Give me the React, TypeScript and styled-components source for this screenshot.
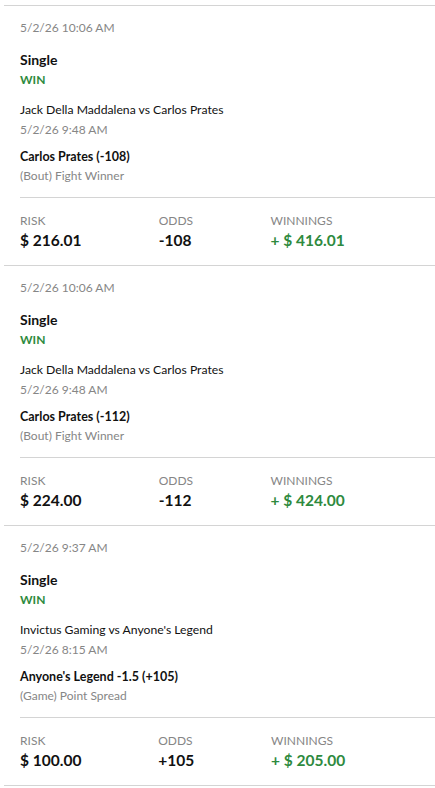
import React from 'react';
import styled, { createGlobalStyle } from 'styled-components';

const GlobalStyle = createGlobalStyle`
  body {
    margin: 0;
    background: #fff;
    font-family: Lato, "Liberation Sans", sans-serif;
    color: #111;
  }
`;

const BetList = styled.div`
  margin: 5px 0 0 4px;
  border-top: 1px solid #d4d4d4;
`;

const BetCard = styled.div`
  display: flex;
  flex-direction: column;
  padding: 14px 0 15px 16px;
  border-bottom: 1px solid #d4d4d4;
`;

const Muted = styled.div<{ $gap?: number }>`
  font-size: 12px;
  line-height: 16px;
  color: #868686;
  margin-top: ${(p) => p.$gap ?? 0}px;
`;

const BetType = styled.div`
  font-size: 14px;
  line-height: 18px;
  font-weight: 700;
  margin-top: 15px;
`;

const Result = styled.div`
  font-size: 12px;
  line-height: 16px;
  font-weight: 700;
  color: #2e8a3e;
  margin-top: 3px;
`;

const Matchup = styled.div`
  font-size: 12.2px;
  line-height: 18px;
  margin-top: 13px;
`;

const Selection = styled.div`
  font-size: 12.5px;
  line-height: 16px;
  font-weight: 700;
  margin-top: 11px;
`;

const Divider = styled.div`
  height: 1px;
  background: #d4d4d4;
  margin-top: 13px;
`;

const Stats = styled.div`
  display: flex;
  margin-top: 15px;
  padding-right: 13px;
`;

const Stat = styled.div`
  flex: 1 1 auto;
  display: flex;
  flex-direction: column;
`;

const StatValue = styled.div<{ $win?: boolean }>`
  font-size: 15.5px;
  line-height: 20px;
  font-weight: 700;
  margin-top: 1px;
  color: ${(p) => (p.$win ? '#2e8a3e' : '#111')};
`;

type Bet = {
  placed: string;
  matchup: string;
  eventTime: string;
  selection: string;
  market: string;
  risk: string;
  odds: string;
  winnings: string;
};

const bets: Bet[] = [
  {
    placed: '5/2/26 10:06 AM',
    matchup: 'Jack Della Maddalena vs Carlos Prates',
    eventTime: '5/2/26 9:48 AM',
    selection: 'Carlos Prates (-108)',
    market: '(Bout) Fight Winner',
    risk: '$ 216.01',
    odds: '-108',
    winnings: '+ $ 416.01',
  },
  {
    placed: '5/2/26 10:06 AM',
    matchup: 'Jack Della Maddalena vs Carlos Prates',
    eventTime: '5/2/26 9:48 AM',
    selection: 'Carlos Prates (-112)',
    market: '(Bout) Fight Winner',
    risk: '$ 224.00',
    odds: '-112',
    winnings: '+ $ 424.00',
  },
  {
    placed: '5/2/26 9:37 AM',
    matchup: "Invictus Gaming vs Anyone's Legend",
    eventTime: '5/2/26 8:15 AM',
    selection: "Anyone's Legend -1.5 (+105)",
    market: '(Game) Point Spread',
    risk: '$ 100.00',
    odds: '+105',
    winnings: '+ $ 205.00',
  },
];

function App() {
  return (
    <>
      <GlobalStyle />
      <BetList>
        {bets.map((bet, i) => (
          <BetCard key={i}>
            <Muted>{bet.placed}</Muted>
            <BetType>Single</BetType>
            <Result>WIN</Result>
            <Matchup>{bet.matchup}</Matchup>
            <Muted $gap={3}>{bet.eventTime}</Muted>
            <Selection>{bet.selection}</Selection>
            <Muted $gap={3}>{bet.market}</Muted>
            <Divider />
            <Stats>
              <Stat>
                <Muted>RISK</Muted>
                <StatValue>{bet.risk}</StatValue>
              </Stat>
              <Stat>
                <Muted>ODDS</Muted>
                <StatValue>{bet.odds}</StatValue>
              </Stat>
              <Stat>
                <Muted>WINNINGS</Muted>
                <StatValue $win>{bet.winnings}</StatValue>
              </Stat>
            </Stats>
          </BetCard>
        ))}
      </BetList>
    </>
  );
}

export default App;
